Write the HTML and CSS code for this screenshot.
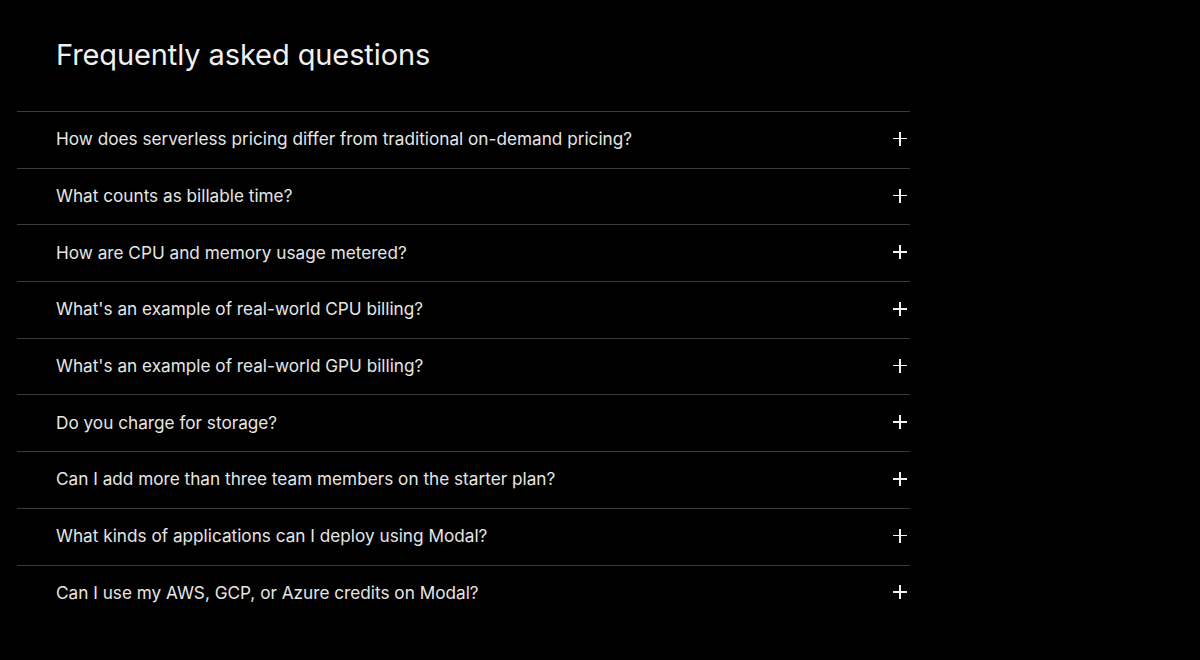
FILE: index.html
```html
<!DOCTYPE html>
<html lang="en">
<head>
    <meta charset="UTF-8">
    <meta name="viewport" content="width=device-width, initial-scale=1.0">
    <title>FAQ</title>
    <link rel="stylesheet" href="styles.css">
</head>
<body>
    <section class="faq">
        <h2>Frequently asked questions</h2>
        <div class="faq-list">
            <div class="faq-item"><span>How does serverless pricing differ from traditional on-demand pricing?</span><i class="plus"></i></div>
            <div class="faq-item"><span>What counts as billable time?</span><i class="plus"></i></div>
            <div class="faq-item"><span>How are CPU and memory usage metered?</span><i class="plus"></i></div>
            <div class="faq-item"><span>What's an example of real-world CPU billing?</span><i class="plus"></i></div>
            <div class="faq-item"><span>What's an example of real-world GPU billing?</span><i class="plus"></i></div>
            <div class="faq-item"><span>Do you charge for storage?</span><i class="plus"></i></div>
            <div class="faq-item"><span>Can I add more than three team members on the starter plan?</span><i class="plus"></i></div>
            <div class="faq-item"><span>What kinds of applications can I deploy using Modal?</span><i class="plus"></i></div>
            <div class="faq-item"><span>Can I use my AWS, GCP, or Azure credits on Modal?</span><i class="plus"></i></div>
        </div>
    </section>
</body>
</html>
```

FILE: styles.css
```css
body {
    margin: 0;
    background-color: #000;
    color: #ececec;
    font-family: Inter, "Noto Sans", sans-serif;
}

.faq {
    width: 893px;
    margin-left: 17px;
    padding-top: 37px;
}

.faq h2 {
    margin: 0 0 38px 39px;
    font-size: 29px;
    font-weight: 400;
    line-height: 36px;
    letter-spacing: -0.1px;
    color: #f0f0f0;
}

.faq-item {
    display: flex;
    align-items: center;
    justify-content: space-between;
    height: 56.7px;
    box-sizing: border-box;
    padding: 0 3px 2px 39px;
    border-top: 1px solid #3a3a3a;
    font-size: 17.2px;
    color: #e6e6e6;
}

.plus {
    position: relative;
    width: 14px;
    height: 14px;
}

.plus::before, .plus::after {
    content: "";
    position: absolute;
    background: #f0f0f0;
}

.plus::before {
    left: 0;
    top: 6px;
    width: 14px;
    height: 1.6px;
}

.plus::after {
    left: 6.2px;
    top: 0;
    width: 1.6px;
    height: 14px;
}
```
